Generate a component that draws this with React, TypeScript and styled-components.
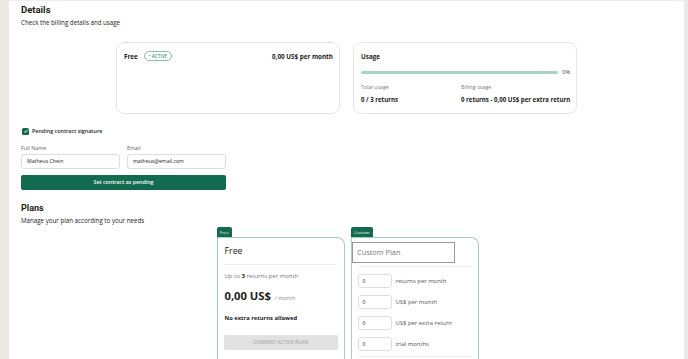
import React from 'react';
import styled, { createGlobalStyle } from 'styled-components';

const GlobalStyle = createGlobalStyle`
  html, body {
    margin: 0;
    padding: 0;
    background: #ece9e3;
    font-family: "Open Sans", "Noto Sans", sans-serif;
    color: #1c1c1c;
  }
  * { box-sizing: border-box; }
`;

const Page = styled.div`
  display: flex;
  height: 359px;
  overflow: hidden;
  padding-left: 9px;
  padding-right: 4px;
`;

const Panel = styled.main`
  flex: 1;
  background: #fff;
  border-top: 1px solid #eeeeee;
  padding: 3px 12px 0;
`;

const Heading = styled.h2<{ $size?: number }>`
  margin: 0;
  font-family: Roboto, "Liberation Sans", sans-serif;
  font-weight: 700;
  font-size: ${(p) => p.$size ?? 9.5}px;
  line-height: 12px;
`;

const SubText = styled.p`
  margin: 2px 0 0;
  font-size: 6.2px;
  line-height: 9px;
  color: #222;
`;

const CardRow = styled.div`
  display: flex;
  justify-content: center;
  gap: 13px;
  margin-top: 15px;
`;

const Card = styled.div`
  width: 224px;
  height: 72px;
  border: 1px solid #e6e6e6;
  border-radius: 8px;
  padding: 8px 6px 0 7px;
`;

const CardHead = styled.div`
  display: flex;
  align-items: center;
  gap: 6px;
  height: 10px;
  font-size: 6.3px;
  font-weight: 700;
`;

const Price = styled.span`
  margin-left: auto;
`;

const Badge = styled.span`
  border: 1px solid #86bfa9;
  color: #4a9a7e;
  border-radius: 6px;
  font-size: 4.6px;
  font-weight: 600;
  height: 10px;
  padding: 0 4px;
  line-height: 8px;
`;

const BarRow = styled.div`
  display: flex;
  align-items: center;
  gap: 4px;
  height: 8px;
  margin-top: 7px;
  font-size: 5.5px;
  color: #333;
`;

const Bar = styled.div`
  flex: 1;
  height: 3px;
  border-radius: 2px;
  background: #a9d3c2;
`;

const StatGrid = styled.div`
  display: grid;
  grid-template-columns: 100px 1fr;
  grid-template-rows: 8px 9px;
  margin-top: 7px;
  row-gap: 3.5px;
  align-items: center;
`;

const StatLabel = styled.span`
  font-size: 5.2px;
  color: #777;
`;

const StatValue = styled.span`
  font-size: 6.1px;
  font-weight: 700;
  white-space: nowrap;
`;

const CheckRow = styled.label`
  display: flex;
  align-items: center;
  gap: 3px;
  height: 8px;
  margin-top: 13px;
  padding-left: 1px;
  font-size: 5.4px;
  font-weight: 600;
`;

const CheckBox = styled.span`
  width: 7px;
  height: 7px;
  border-radius: 1.5px;
  background: #126b4e;
  display: flex;
  align-items: center;
  justify-content: center;
`;

const FieldRow = styled.div`
  display: flex;
  gap: 7px;
  margin-top: 9.5px;
`;

const Field = styled.div`
  display: flex;
  flex-direction: column;
  gap: 2.5px;
  width: 99px;
`;

const FieldLabel = styled.span`
  font-size: 5.4px;
  line-height: 7px;
  color: #666;
`;

const TextBox = styled.div`
  height: 15px;
  border: 1px solid #dddddd;
  border-radius: 3px;
  padding: 0 5px;
  font-size: 5.2px;
  line-height: 13px;
`;

const PrimaryButton = styled.div`
  width: 205px;
  height: 15px;
  margin-top: 6px;
  background: #126b4e;
  color: #fff;
  border-radius: 2px;
  font-size: 5.3px;
  font-weight: 600;
  text-align: center;
  line-height: 15px;
`;

const PlansSection = styled.section`
  margin-top: 12px;
`;

const PlanRow = styled.div`
  display: flex;
  justify-content: center;
  gap: 6px;
  margin-top: 2px;
  padding-left: 2px;
`;

const PlanWrap = styled.div`
  display: flex;
  flex-direction: column;
  width: 128px;
`;

const Tab = styled.div`
  align-self: flex-start;
  background: #126b4e;
  color: #fff;
  font-size: 4.3px;
  padding: 0 3.5px;
  height: 10px;
  line-height: 10px;
  border-radius: 2px 2px 0 0;
`;

const PlanCard = styled.div`
  height: 130px;
  border: 1.5px solid #a3cfbe;
  border-bottom: none;
  border-radius: 0 8px 0 0;
  padding: 5px 6px 0;
`;

const PlanTitle = styled.div`
  font-size: 8.8px;
  line-height: 12px;
  padding: 1.5px 0 7px 1px;
  border-bottom: 1px solid #efefef;
`;

const PlanLine = styled.div`
  font-size: 6px;
  line-height: 8px;
  color: #777;
  margin-top: 7px;
  padding-left: 1px;
  b { color: #222; }
`;

const BigPrice = styled.div`
  display: flex;
  align-items: baseline;
  gap: 4px;
  margin-top: 9px;
  padding-left: 1px;
  font-size: 11.2px;
  line-height: 14px;
  font-weight: 700;
  span { font-size: 5.5px; font-weight: 400; color: #888; }
`;

const NoteLine = styled.div`
  font-size: 5.8px;
  line-height: 8px;
  font-weight: 700;
  margin-top: 9px;
  padding-left: 1px;
`;

const GreyButton = styled.div`
  margin-top: 13px;
  height: 15px;
  background: #e2e2e2;
  color: #aaa;
  border-radius: 2px;
  font-size: 5px;
  font-weight: 600;
  text-align: center;
  line-height: 15px;
`;

const NameInput = styled.div`
  width: 103px;
  height: 21px;
  margin: -1.5px 0 0 -5.5px;
  border: 1px solid #999;
  font-size: 7.4px;
  color: #777;
  padding: 0 4px;
  line-height: 19px;
`;

const Divider = styled.div<{ $top: number }>`
  height: 1px;
  background: #efefef;
  margin-top: ${(p) => p.$top}px;
`;

const NumRow = styled.div`
  display: flex;
  align-items: center;
  gap: 4px;
  margin-top: 7px;
  font-size: 5.9px;
  color: #555;
`;

const NumBox = styled.div`
  width: 34px;
  height: 14px;
  border: 1px solid #dedede;
  border-radius: 3px;
  font-size: 5px;
  color: #222;
  padding-left: 4px;
  line-height: 12px;
`;

const customFields = ['returns per month', 'US$ per month', 'US$ per extra return', 'trial months'];

export default function App() {
  return (
    <>
      <GlobalStyle />
      <Page>
        <Panel>
          <Heading>Details</Heading>
          <SubText>Check the billing details and usage</SubText>
          <CardRow>
            <Card>
              <CardHead>
                Free
                <Badge>• ACTIVE</Badge>
                <Price>0,00 US$ per month</Price>
              </CardHead>
            </Card>
            <Card>
              <CardHead>Usage</CardHead>
              <BarRow>
                <Bar />
                0%
              </BarRow>
              <StatGrid>
                <StatLabel>Total usage</StatLabel>
                <StatLabel>Billing usage</StatLabel>
                <StatValue>0 / 3 returns</StatValue>
                <StatValue>0 returns - 0,00 US$ per extra return</StatValue>
              </StatGrid>
            </Card>
          </CardRow>
          <CheckRow>
            <CheckBox>
              <svg width="6" height="6" viewBox="0 0 10 10">
                <path d="M2 5.2 L4.2 7.4 L8 2.8" stroke="#fff" strokeWidth="1.6" fill="none" />
              </svg>
            </CheckBox>
            Pending contract signature
          </CheckRow>
          <FieldRow>
            <Field>
              <FieldLabel>Full Name</FieldLabel>
              <TextBox>Matheus Chein</TextBox>
            </Field>
            <Field>
              <FieldLabel>Email</FieldLabel>
              <TextBox>matheus@email.com</TextBox>
            </Field>
          </FieldRow>
          <PrimaryButton>Set contract as pending</PrimaryButton>
          <PlansSection>
            <Heading as="h3" $size={9}>Plans</Heading>
            <SubText>Manage your plan according to your needs</SubText>
            <PlanRow>
              <PlanWrap>
                <Tab>Free</Tab>
                <PlanCard>
                  <PlanTitle>Free</PlanTitle>
                  <PlanLine>Up to <b>3</b> returns per month</PlanLine>
                  <BigPrice>0,00 US$ <span>/ month</span></BigPrice>
                  <NoteLine>No extra returns allowed</NoteLine>
                  <GreyButton>CURRENT ACTIVE PLAN</GreyButton>
                </PlanCard>
              </PlanWrap>
              <PlanWrap>
                <Tab>Custom</Tab>
                <PlanCard>
                  <NameInput>Custom Plan</NameInput>
                  <Divider $top={3} />
                  {customFields.map((f) => (
                    <NumRow key={f}>
                      <NumBox>0</NumBox>
                      {f}
                    </NumRow>
                  ))}
                  <Divider $top={5} />
                </PlanCard>
              </PlanWrap>
            </PlanRow>
          </PlansSection>
        </Panel>
      </Page>
    </>
  );
}
